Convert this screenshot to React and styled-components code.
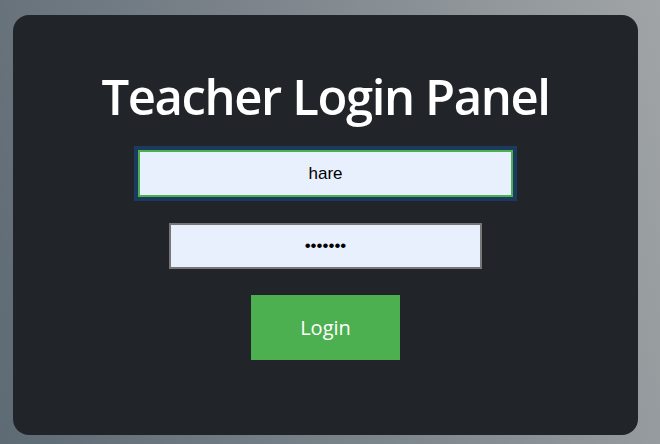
import React, { useState } from 'react'
import styled, { createGlobalStyle } from 'styled-components'

const GlobalStyle = createGlobalStyle`
    html, body {
        margin: 0;
        padding: 0;
        height: 100%;
    }
    body {
        background: linear-gradient(75deg, #5e6a74 0%, #7a838a 45%, #a0a4a6 100%);
        font-family: "Open Sans", "Noto Sans", sans-serif;
    }
`
const Page = styled.div`
    height: 444px;
    box-sizing: border-box;
    padding: 15px 22px 9px 13px;
    display: flex;
`
const Card = styled.form`
    flex: 1;
    background-color: #212529;
    border-radius: 16px;
    display: flex;
    flex-direction: column;
    align-items: center;
    padding-top: 52px;
`
const Title = styled.h1`
    margin: 0 0 24px;
    color: #ffffff;
    font-size: 49px;
    font-weight: 600;
    line-height: 59px;
    letter-spacing: -1.4px;
`
const Input = styled.input`
    box-sizing: border-box;
    width: ${props => props.wide ? "375px" : "313px"};
    height: ${props => props.wide ? "47px" : "46px"};
    margin-bottom: 26px;
    background-color: #e8f0fe;
    border: 2px solid ${props => props.focused ? "#4caf50" : "#767676"};
    outline: ${props => props.focused ? "4px solid #1b3a5e" : "none"};
    font-family: "Liberation Sans", Arial, sans-serif;
    font-size: 17px;
    text-align: center;
    color: #000;
    padding: 0;
`
const Button = styled.button`
    width: 149px;
    height: 65px;
    border: none;
    background-color: #4caf50;
    color: #ffffff;
    font-family: "Open Sans", "Noto Sans", sans-serif;
    font-size: 20px;
    cursor: pointer;
`

const App = () => {
    const [user, setUser] = useState("hare")
    const [pass, setPass] = useState("1234567")
    return (
        <>
            <GlobalStyle />
            <Page>
                <Card onSubmit={e => e.preventDefault()}>
                    <Title>Teacher Login Panel</Title>
                    <Input wide focused value={user} onChange={e => setUser(e.target.value)} />
                    <Input type="password" value={pass} onChange={e => setPass(e.target.value)} />
                    <Button type="submit">Login</Button>
                </Card>
            </Page>
        </>
    )
}

export default App
